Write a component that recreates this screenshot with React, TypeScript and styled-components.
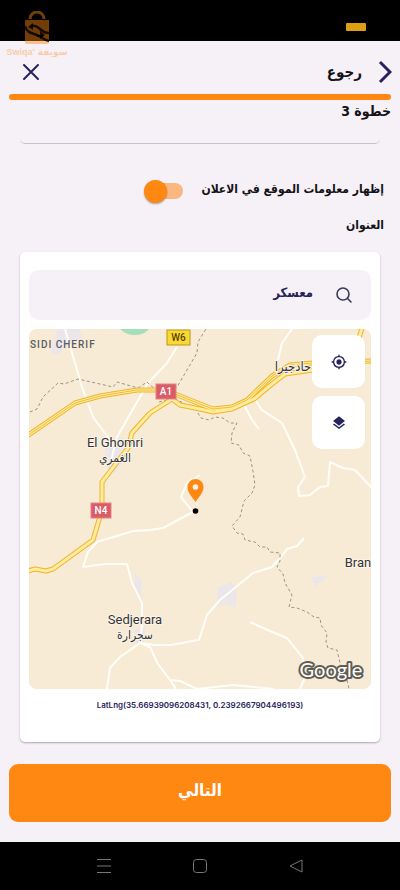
import React, { useState } from "react";
import styled, { createGlobalStyle } from "styled-components";
import { MdLayers, MdMyLocation } from "react-icons/md";

const colors = {
  page: "#f6f1f6",
  orange: "#ff8812",
  navy: "#27235c",
  ink: "#141318",
  land: "#f7ebd5",
};

const GlobalStyle = createGlobalStyle`
  * { box-sizing: border-box; }
  body {
    margin: 0;
    background: ${colors.page};
    font-family: "DejaVu Sans Condensed", "DejaVu Sans", sans-serif;
    color: ${colors.ink};
  }
  button, input { font: inherit; color: inherit; }
`;

const Screen = styled.div`
  position: relative;
  min-height: 100vh;
  display: flex;
  flex-direction: column;
  background: ${colors.page};
`;

const StatusBar = styled.div`
  height: 41px;
  background: #000;
  display: flex;
  align-items: flex-end;
  justify-content: flex-end;
  padding: 0 34px 10px;
`;

const Battery = styled.span`
  width: 20px;
  height: 8px;
  border-radius: 1px;
  background: #dda012;
`;

const Watermark = styled.div`
  position: absolute;
  top: 11px;
  left: 6px;
  width: 62px;
  display: flex;
  flex-direction: column;
  align-items: center;
  color: ${colors.orange};
  pointer-events: none;
`;

const WatermarkText = styled.span`
  display: flex;
  direction: ltr;
  gap: 3px;
  font: 700 9px/14px "Liberation Sans", "DejaVu Sans", sans-serif;
  opacity: 0.35;
`;

const Header = styled.header`
  height: 53px;
  padding: 8px 4px 0 20px;
  display: flex;
  align-items: center;
  gap: 12px;
`;

const Title = styled.h1`
  margin: 0;
  flex: 1;
  font-size: 15px;
  line-height: 24px;
  font-weight: 700;
`;

const IconButton = styled.button`
  width: 22px;
  height: 26px;
  padding: 0;
  border: 0;
  background: none;
  color: ${colors.navy};
  display: grid;
  place-items: center;
`;

const Progress = styled.div`
  height: 6px;
  margin: 0 9px;
  border-radius: 3px;
  background: ${colors.orange};
`;

const Step = styled.p`
  margin: 0 9px;
  font-size: 14px;
  line-height: 22px;
  font-weight: 700;
`;

const FieldEdge = styled.div`
  height: 22px;
  margin: 0 20px;
  border-bottom: 1px solid #c5c2cd;
  border-radius: 0 0 5px 5px;
`;

const SwitchRow = styled.label`
  margin: 34px 16px 0;
  height: 26px;
  display: flex;
  align-items: center;
  gap: 18px;
`;

const Label = styled.span`
  font-size: 12px;
  line-height: 20px;
  font-weight: 700;
  padding-bottom: 4px;
`;

const Switch = styled.input`
  appearance: none;
  margin: 0;
  width: 40px;
  height: 24px;
  display: flex;
  align-items: center;
  &::before {
    content: "";
    width: 32px;
    height: 16px;
    border-radius: 8px;
    background: #fab880;
    margin-left: -16px;
  }
  &::after {
    content: "";
    width: 23px;
    height: 23px;
    border-radius: 50%;
    background: ${colors.orange};
    box-shadow: 0 1px 2px #0005;
  }
  &:not(:checked)::after {
    background: #fff;
  }
`;

const Caption = styled.h2`
  margin: 11px 16px 0;
  font-size: 12px;
  line-height: 20px;
  font-weight: 700;
`;

const Card = styled.section`
  margin: 17px 20px 0;
  padding: 18px 9px 29px;
  border-radius: 5px;
  background: #fff;
  box-shadow: 0 1px 2px #aaa6b2;
`;

const SearchBox = styled.label`
  height: 50px;
  padding: 0 18px;
  display: flex;
  align-items: center;
  gap: 22px;
  border-radius: 10px;
  background: ${colors.page};
  color: ${colors.navy};
`;

const SearchInput = styled.input`
  flex: 1;
  min-width: 0;
  padding: 0 0 4px;
  border: 0;
  outline: 0;
  background: none;
  font-size: 13px;
  font-weight: 700;
  line-height: 20px;
`;

const MapFrame = styled.div`
  position: relative;
  height: 360px;
  margin-top: 9px;
  border-radius: 8px;
  overflow: hidden;
  background: ${colors.land};
`;

const MapDrawing = styled.svg`
  display: block;
  width: 100%;
  height: 100%;
`;

const MapControls = styled.div`
  position: absolute;
  top: 6px;
  right: 6px;
  display: grid;
  gap: 8px;
`;

const MapButton = styled.button`
  width: 53px;
  height: 53px;
  padding: 0;
  border: 0;
  border-radius: 10px;
  background: #fff;
  color: ${colors.navy};
  display: grid;
  place-items: center;
`;

const Coordinates = styled.p`
  margin: 8px 0 0;
  direction: ltr;
  text-align: center;
  color: ${colors.navy};
  font: 600 8px/16px Inter, "Liberation Sans", sans-serif;
`;

const NextButton = styled.button`
  height: 58px;
  margin: 22px 9px 20px;
  padding: 0 0 6px;
  border: 0;
  border-radius: 9px;
  background: ${colors.orange};
  color: #fff;
  font-size: 17px;
  font-weight: 700;
`;

const SystemNav = styled.nav`
  flex: 1;
  min-height: 48px;
  background: #000;
  direction: ltr;
  display: flex;
  align-items: center;
  justify-content: center;
  gap: 20%;
`;

const NavButton = styled.button`
  width: 16px;
  height: 16px;
  padding: 0;
  border: 0;
  background: none;
  color: #77777a;
  display: grid;
  place-items: center;
`;

const whiteRoads = [
  "M65 329L82 387 93 417 115 447",
  "M177 347L167 363 148 383 117 437 110 465",
  "M200 475L187 483 181 497 193 512 163 528 150 530 133 531 97 542 88 552 83 567 105 564 127 564 132 583 142 603 142 625 140 643 120 657 110 668 107 689",
  "M140 643L155 645 170 645 182 643 192 641 199 640 207 615 220 600 253 573 272 567 281 557 287 549 297 546 304 538",
  "M140 643L150 647 158 664 170 680 180 681 197 689",
  "M170 680L176 689",
  "M250 622L270 631 287 638 303 658 304 680 300 689",
  "M197 689L233 685 273 689",
  "M292 329L282 343 278 360",
  "M243 403L252 420 259 429",
  "M255 400L262 410 282 423 295 450 305 477 298 487 299 496 310 495 320 487 328 486 330 462 343 468 355 470 371 487",
];

const borders = [
  "M30 412L37 409 43 397 58 383 64 384 78 379 113 387 117 382 138 388 147 382 157 391",
  "M174 389L177 387 197 353 198 342 206 329",
  "M159 402L174 398 196 410 201 418 209 420 215 417 223 418 230 423 237 423 232 433 231 443 239 445 243 453 250 456 253 471 255 485 252 493 244 501 240 517 232 526 237 533 243 534 245 540 255 542 260 547 267 547 270 552 280 553 280 561 277 567 283 574 285 583 292 595 289 607 297 608 307 612 314 617 320 618 321 625 327 633 326 642 328 648 337 650 340 663 347 680 349 689",
];

const highways = [
  "M27 436L75 403 100 396 137 390 157 390 175 394 200 404 213 409 232 407 247 400 272 376 290 365 313 363 373 361",
  "M172 399L150 413 132 433 128 448 102 482 102 510 93 540 53 569 46 571 35 569 28 571",
  "M172 399L180 405 200 409 213 412 232 409 254 399 272 384 285 374 313 370",
  "M362 328L359 338",
];

const routeBadges = [
  { name: "W6", x: 167, y: 330, w: 23, fill: "#fbd82f", ink: "#584300", line: "#b89723" },
  { name: "A1", x: 156, y: 384, w: 20, fill: "#d95c67", ink: "#fff", line: "#e38388" },
  { name: "N4", x: 91, y: 503, w: 20, fill: "#d95c67", ink: "#fff", line: "#e38388" },
];

const places = [
  { text: "El Ghomri", x: 115, y: 447, size: 13 },
  { text: "الغمري", x: 115, y: 462, size: 12 },
  { text: "Sedjerara", x: 135, y: 624, size: 13 },
  { text: "سجرارة", x: 135, y: 639, size: 12 },
  { text: "حادجيرا", x: 293, y: 371, size: 13 },
  { text: "Bran", x: 358, y: 567, size: 13 },
];

function AreaMap() {
  return (
    <MapDrawing viewBox="29 329 342 360" preserveAspectRatio="xMidYMid slice" direction="ltr" role="img" aria-label="خريطة">
      <rect x="-300" y="-300" width="1400" height="1400" fill={colors.land} />
      <path d="M120 329h29q-5 6-14 6t-15-6z" fill="#a5dfba" />
      <path d="M58 329h22l2 9-14 5-10 12-7-3z M104 440l18-3 5 18-11 18-9-5z M135 573l7 8-1 21-6-8z M217 588l14-6 6 10-2 16-9-4-9 2z M312 577l16-1-8 6-6 5z M134 630l12-4-2 14-8 3z" fill="#ebe6ea" />
      <g fill="none" stroke="#fffdf7" strokeWidth="2" strokeLinejoin="round">
        {whiteRoads.map((d) => <path key={d} d={d} />)}
      </g>
      <g fill="none" stroke="#9a9286" strokeWidth="1" strokeDasharray="3 2.5">
        {borders.map((d) => <path key={d} d={d} />)}
      </g>
      <g fill="none" strokeLinejoin="round">
        {highways.map((d) => <path key={d} d={d} stroke="#edb52d" strokeWidth="5" />)}
        {highways.map((d) => <path key={d} d={d} stroke="#ffeb9c" strokeWidth="3" />)}
        <path d={highways[0]} stroke="#efbd3c" strokeWidth="1" />
      </g>
      {routeBadges.map((b) => (
        <g key={b.name}>
          <rect x={b.x} y={b.y} width={b.w} height="15" fill={b.fill} stroke={b.line} />
          <text x={b.x + b.w / 2} y={b.y + 11} textAnchor="middle" fill={b.ink} fontFamily="Roboto, sans-serif" fontWeight="500" fontSize="10">{b.name}</text>
        </g>
      ))}
      <g fill="#34343a" textAnchor="middle" fontFamily='Roboto, "DejaVu Sans Condensed", "DejaVu Sans", sans-serif' stroke="#fbf4e7" strokeWidth="2" paintOrder="stroke">
        {places.map((p) => <text key={p.text} x={p.x} y={p.y} fontSize={p.size}>{p.text}</text>)}
      </g>
      <text x="30" y="348" fill="#5c5c66" fontFamily="Roboto, sans-serif" fontWeight="500" fontSize="10" letterSpacing="1">SIDI CHERIF</text>
      <path d="M195.500 502c-3-5-8-9-8-15a8 8 0 0 1 16 0c0 6-5 10-8 15z" fill={colors.orange} />
      <circle cx="195.500" cy="487" r="2.800" fill="#fff3e5" />
      <circle cx="195.500" cy="511" r="2.800" fill="#000" />
      <text x="331" y="677" textAnchor="middle" fill="#fff" stroke="#615d55" strokeWidth="4" strokeLinejoin="round" paintOrder="stroke" fontFamily="Lato, sans-serif" fontWeight="400" fontSize="20">Google</text>
    </MapDrawing>
  );
}

export default function App() {
  const [shown, setShown] = useState(true);
  const [query, setQuery] = useState("معسكر");

  return (
    <Screen dir="rtl" lang="ar">
      <GlobalStyle />
      <StatusBar dir="ltr"><Battery /></StatusBar>
      <Watermark>
        <svg width="26" height="34" viewBox="0 0 26 34" fill="none">
          <g opacity=".45">
            <path d="M6 8a7 7 0 0 1 14 0" stroke="currentColor" strokeWidth="3" />
            <path d="M1 9h24v22q0 2-2 2H3q-2 0-2-2z" fill="currentColor" />
          </g>
          <g stroke="#000" strokeOpacity=".8" strokeWidth="2.500">
            <path d="M1 15c2 8 9 7 14 10 4 2 6 5 10 5" />
            <path d="M7 15c4-1 6 0 9 3s5 4 9 4" />
            <path d="M13 25h6" strokeWidth="2" />
          </g>
          <path d="M4 16l5-4v7zM21 24l-5-4v8z" fill="#000" fillOpacity=".8" />
        </svg>
        <WatermarkText><span>Swiqa'</span><span lang="ar">سويقة</span></WatermarkText>
      </Watermark>

      <Header>
        <IconButton type="button" aria-label="رجوع">
          <svg width="14" height="24" viewBox="0 0 14 24" fill="none" stroke="currentColor" strokeWidth="3"><path d="M2 2l10 10L2 22" /></svg>
        </IconButton>
        <Title>رجوع</Title>
        <IconButton type="button" aria-label="إغلاق">
          <svg width="18" height="18" viewBox="0 0 18 18" fill="none" stroke="currentColor" strokeWidth="2" strokeLinecap="round"><path d="M2 2l14 14M16 2L2 16" /></svg>
        </IconButton>
      </Header>
      <Progress role="progressbar" aria-valuenow={100} aria-label="خطوة 3" />
      <Step>خطوة 3</Step>
      <FieldEdge />

      <SwitchRow>
        <Label>إظهار معلومات الموقع في الاعلان</Label>
        <Switch type="checkbox" role="switch" checked={shown} onChange={(e) => setShown(e.target.checked)} />
      </SwitchRow>
      <Caption>العنوان</Caption>

      <Card>
        <SearchBox>
          <svg width="18" height="18" viewBox="0 0 18 18" fill="none" stroke="#3c3958" strokeWidth="1.600" strokeLinecap="round"><circle cx="8" cy="8" r="6" /><path d="M12.500 12.500L16 16" /></svg>
          <SearchInput type="text" aria-label="العنوان" value={query} onChange={(e) => setQuery(e.target.value)} />
        </SearchBox>
        <MapFrame>
          <AreaMap />
          <MapControls>
            <MapButton type="button" aria-label="موقعي"><MdMyLocation size={16} /></MapButton>
            <MapButton type="button" aria-label="الطبقات"><MdLayers size={16} /></MapButton>
          </MapControls>
        </MapFrame>
        <Coordinates>LatLng(35.66939096208431, 0.2392667904496193)</Coordinates>
      </Card>

      <NextButton type="button">التالي</NextButton>
      <SystemNav>
        <NavButton type="button" aria-label="القائمة">
          <svg width="14" height="14" viewBox="0 0 14 14" stroke="currentColor"><path d="M0 .5h14M0 7h14M0 13.500h14" /></svg>
        </NavButton>
        <NavButton type="button" aria-label="الرئيسية">
          <svg width="14" height="14" viewBox="0 0 14 14" fill="none" stroke="currentColor"><rect x=".5" y=".5" width="13" height="13" rx="3" /></svg>
        </NavButton>
        <NavButton type="button" aria-label="السابق">
          <svg width="14" height="14" viewBox="0 0 14 14" fill="none" stroke="currentColor" strokeLinejoin="round"><path d="M13 1v12L1 7z" /></svg>
        </NavButton>
      </SystemNav>
    </Screen>
  );
}
